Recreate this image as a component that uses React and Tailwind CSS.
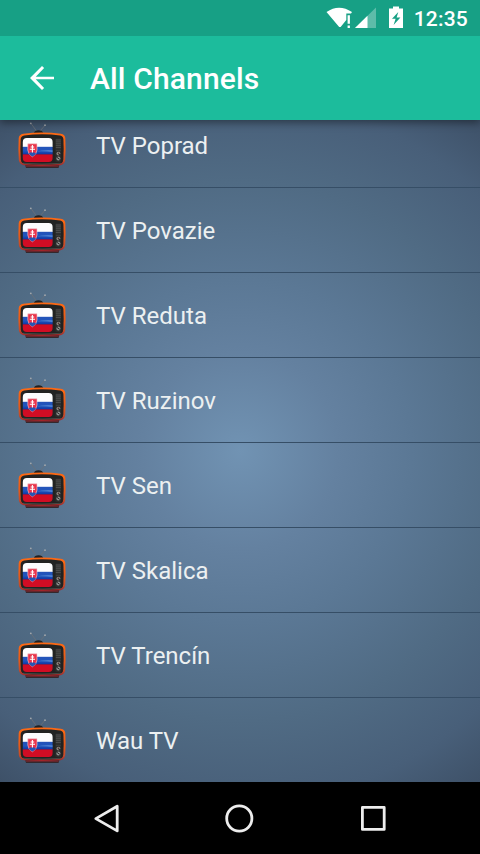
const channels = [
    'TV Poprad',
    'TV Povazie',
    'TV Reduta',
    'TV Ruzinov',
    'TV Sen',
    'TV Skalica',
    'TV Trencín',
    'Wau TV',
]

function TvIcon() {
    return (
        <svg viewBox="0 0 48 48" className="w-12 h-12 flex-shrink-0">
            <defs>
                <linearGradient id="tvShell" x1="0" y1="0" x2="0" y2="1">
                    <stop offset="0" stopColor="#ff6a13" />
                    <stop offset="0.6" stopColor="#e2571a" />
                    <stop offset="0.85" stopColor="#c04a2c" />
                    <stop offset="1" stopColor="#a02028" />
                </linearGradient>
                <linearGradient id="tvBlue" x1="0" y1="0" x2="0" y2="1">
                    <stop offset="0" stopColor="#2352b8" />
                    <stop offset="0.5" stopColor="#1f55bd" />
                    <stop offset="1" stopColor="#0a33a0" />
                </linearGradient>
                <clipPath id="tvScreen">
                    <rect x="4.8" y="17" width="29.8" height="24" rx="4" />
                </clipPath>
            </defs>

            {/* Antenna */}
            <path d="M12.8 2.2L18.5 10M27 4.3L22 10" stroke="#6b7077" strokeWidth="0.8" fill="none" />
            <circle cx="12.8" cy="2.3" r="0.9" fill="#a3a8ad" />
            <circle cx="27" cy="4.2" r="0.9" fill="#a3a8ad" />
            <path d="M15.8 12.3Q16.5 9.4 20.5 9.2Q24.5 9.4 25.4 12.3Z" fill="#1f2224" />

            {/* Feet and shell */}
            <path d="M7 43.5H41.5L40.5 47H8Z" fill="#33282d" />
            <path d="M8 45.3H40.5" stroke="#8c242c" strokeWidth="0.7" />
            <path d="M5.5 12.8Q24 10.2 42.8 12.8Q47.1 13.4 47.3 17.2Q48 28 47.2 39Q46.6 43.5 42.5 44.2Q24 45.6 5.8 44.2Q1.4 43.5 0.8 39Q0 28 0.7 17.2Q1 13.4 5.5 12.8Z" fill="url(#tvShell)" />
            <path d="M6.2 14.4Q24 12 42.2 14.4Q45.1 14.9 45.4 17.9Q46 28 45.3 38.6Q44.8 42.4 41.8 42.9Q24 44.3 6.6 42.9Q3.3 42.4 2.8 38.6Q2 28 2.7 17.9Q3 14.9 6.2 14.4Z" fill="#222322" />
            <path d="M5 42.3Q24 43.8 43.5 42.3" stroke="#5e5e59" strokeWidth="0.6" fill="none" />

            {/* Screen with the flag */}
            <g clipPath="url(#tvScreen)">
                <rect x="4" y="17" width="31" height="9" fill="#fdfdfe" />
                <rect x="4" y="25.8" width="31" height="8" fill="url(#tvBlue)" />
                <path d="M18 30.5Q27 28.3 35 29.2V31.2Q27 30 18 30.5Z" fill="#5c90d8" opacity="0.7" />
                <rect x="4" y="33.4" width="31" height="8" fill="#d10d24" />
            </g>
            <path d="M9.8 22.8H19V29Q18.7 33.6 14.4 35.8Q10.1 33.6 9.8 29Z" fill="#e9324a" stroke="#efc9d2" strokeWidth="0.6" />
            <path d="M10.8 32.8Q12.4 30.6 14.4 31.6Q16.4 30.6 18 32.8Q16.8 34.6 14.4 35.4Q12 34.6 10.8 32.8Z" fill="#2455b5" />
            <path d="M14.4 24V31.4M12.6 26H16.2M11.8 28.3H17" stroke="#fff" strokeWidth="1.1" fill="none" />

            {/* Controls */}
            <rect x="37.4" y="17.5" width="5.7" height="23.5" rx="1" fill="#2c2d2c" />
            <path d="M37.8 19H42.8M37.8 20.9H42.8M37.8 22.8H42.8M37.8 24.7H42.8M37.8 26.6H42.8" stroke="#555655" strokeWidth="0.9" />
            <path d="M37.8 29.4H42.8" stroke="#484948" strokeWidth="0.6" />
            <circle cx="40.4" cy="32.6" r="1.9" fill="#8e8781" />
            <path d="M40.4 32.6L41.8 33.8" stroke="#201c1a" strokeWidth="1.1" />
            <circle cx="40.4" cy="32.2" r="0.7" fill="#4a3029" />
            <circle cx="40.4" cy="37.4" r="2" fill="#8f9290" />
            <path d="M39 36.4L41.8 38.4" stroke="#292a29" strokeWidth="1" />
        </svg>
    )
}

function StatusBar() {
    return (
        <div className="relative z-20 h-9 flex-shrink-0 flex items-center justify-end pr-3 bg-[#17a085] text-white">
            <svg viewBox="0 0 80 24" className="w-20 h-6 mr-2 -mt-0.5" fill="#fff">
                {/* Wifi */}
                <path d="M0.5 7Q13 -1.6 26 7L25 8.6H20.3V15L14.6 22H13.2Z" />
                <path d="M21.6 10.2H23.9V18.8H21.6ZM21.6 20.6H23.9V23H21.6Z" />
                {/* Mobile signal */}
                <path d="M50 2.4V23H29Z" opacity="0.3" />
                <path d="M41.5 10.7V23H29Z" />
                {/* Battery */}
                <path fillRule="evenodd" d="M67 1.6H73V3.6H77V23H63V3.6H67ZM72.3 7L66 13.8H69.6L67.6 20L74.4 12.4H70.6Z" />
            </svg>
            <span className="pt-0.5 text-[21px] leading-none font-medium tracking-[0.2px]">12:35</span>
        </div>
    )
}

function NavBar() {
    return (
        <div className="h-[72px] flex-shrink-0 bg-black">
            <svg viewBox="0 0 480 72" className="w-full h-full" fill="none" stroke="#ededed" strokeWidth="2.8" strokeLinejoin="round">
                <path d="M95.8 36.6L117.2 24.3V48.9Z" />
                <circle cx="239.3" cy="36.5" r="12.6" />
                <rect x="362.4" y="25.4" width="21.8" height="22" />
            </svg>
        </div>
    )
}

export default function App() {
    return (
        <div className="w-[480px] h-[854px] flex flex-col overflow-hidden font-['Roboto',sans-serif]">
            <StatusBar />

            <header className="relative z-10 h-[84px] flex-shrink-0 flex items-center bg-[#1cbc9c] text-white shadow-[0_3px_8px_rgba(0,0,0,0.4)]">
                <svg viewBox="0 0 24 24" className="w-9 h-9 ml-6" fill="#fff">
                    <path d="M20 11.1H7.83l5.59-5.69L12 4l-8 8 8 8 1.41-1.41L7.83 12.9H20z" />
                </svg>
                <h1 className="ml-[30px] pt-px text-[30px] leading-none font-medium tracking-[0.15px]">All Channels</h1>
            </header>

            <main className="flex-1 min-h-0 flex flex-col justify-end overflow-hidden bg-[radial-gradient(circle_at_center,#7193b3_0%,#6481a0_24%,#5b7895_42%,#506b84_66%,#485f79_86%,#3e5168_100%)]">
                <ul className="flex flex-col">
                    {channels.map((name, i) => (
                        <li key={name} className={i < channels.length - 1 ? 'h-[85px] flex items-center pl-[18px] border-b border-[#364e66]' : 'h-[84px] flex items-center pl-[18px]'}>
                            <TvIcon />
                            <span className="ml-[30px] pt-0.5 text-2xl text-[#ecf0f1]">{name}</span>
                        </li>
                    ))}
                </ul>
            </main>

            <NavBar />
        </div>
    )
}
